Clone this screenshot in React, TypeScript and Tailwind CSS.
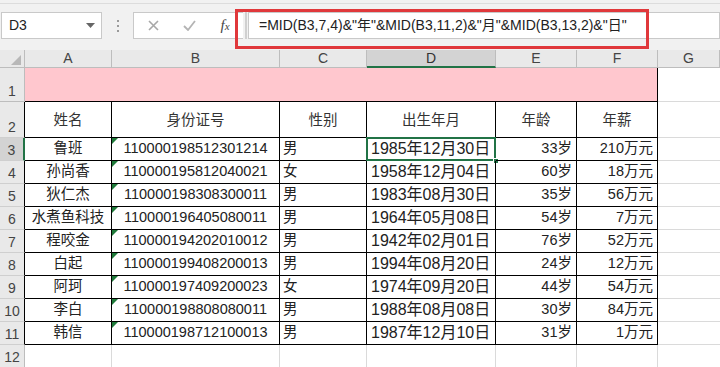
import type { ReactNode } from 'react';

const FONT = "font-['Liberation_Sans','Noto_Sans_CJK_SC',sans-serif]";

const COLS = ['A', 'B', 'C', 'D', 'E', 'F', 'G'];

const HEADERS = ['姓名', '身份证号', '性别', '出生年月', '年龄', '年薪'];

// name, id, gender, birth, age, salary
const ROWS = [
  ['鲁班', '110000198512301214', '男', '1985年12月30日', '33岁', '210万元'],
  ['孙尚香', '110000195812040021', '女', '1958年12月04日', '60岁', '18万元'],
  ['狄仁杰', '110000198308300011', '男', '1983年08月30日', '35岁', '56万元'],
  ['水煮鱼科技', '110000196405080011', '男', '1964年05月08日', '54岁', '7万元'],
  ['程咬金', '110000194202010012', '男', '1942年02月01日', '76岁', '52万元'],
  ['白起', '110000199408200013', '男', '1994年08月20日', '24岁', '12万元'],
  ['阿珂', '110000197409200023', '女', '1974年09月20日', '44岁', '54万元'],
  ['李白', '110000198808080011', '男', '1988年08月08日', '30岁', '84万元'],
  ['韩信', '110000198712100013', '男', '1987年12月10日', '31岁', '1万元'],
];

function RowHead({ n, className }: { n: number; className: string }) {
  return (
    <div className={`flex items-end justify-center text-[14px] leading-[20px] text-[#444] ${className}`}>
      {n}
    </div>
  );
}

function Cell({ className, children }: { className: string; children?: ReactNode }) {
  return <div className={`relative flex items-center overflow-visible whitespace-nowrap ${className}`}>{children}</div>;
}

function Toolbar() {
  return (
    <div className="relative h-[50px] bg-[#f1f1f1] pt-[3px]">
      <div className="flex items-start border-t border-[#dcdcdc] pt-[8px] pl-[1px]">
        {/* name box */}
        <div className="w-[101px] h-[27px] bg-white border border-[#c9c9c9] flex items-center justify-between pl-[7px] pr-[6px] text-[14px] text-[#222]">
          <span>D3</span>
          <svg width="9" height="5" viewBox="0 0 9 5">
            <path d="M0 0h9L4.5 5z" fill="#666" />
          </svg>
        </div>
        <div className="w-[31px] h-[27px] flex flex-col items-center justify-center gap-[3px]">
          <span className="w-[2px] h-[2px] bg-[#9a9a9a]" />
          <span className="w-[2px] h-[2px] bg-[#9a9a9a]" />
          <span className="w-[2px] h-[2px] bg-[#9a9a9a]" />
        </div>
        {/* formula buttons */}
        <div className="w-[110px] h-[27px] bg-white border-y border-l border-[#c9c9c9] flex items-center">
          <div className="w-[36px] flex justify-center ml-[1px]">
            <svg width="11" height="11" viewBox="0 0 11 11">
              <path d="M1 1l9 9M10 1l-9 9" stroke="#a8a8a8" strokeWidth="1.6" />
            </svg>
          </div>
          <div className="w-[36px] flex justify-center">
            <svg width="13" height="11" viewBox="0 0 13 11">
              <path d="M1 6l4 4L12 1" stroke="#b4b4b4" strokeWidth="1.8" fill="none" />
            </svg>
          </div>
          <div className="w-[36px] flex justify-center font-['Liberation_Serif',serif] italic text-[15px] text-[#444] leading-none">
            f<span className="text-[11px] mt-[3px]">x</span>
          </div>
        </div>
        <div className="w-[2px] h-[27px] border-x border-[#d0d0d0] bg-[#f1f1f1] ml-[2px]" />
        <div className="flex-1 h-[27px] bg-white border border-[#c9c9c9] ml-[1px] flex items-center pl-[10px] text-[14px] text-[#222]">
          =MID(B3,7,4)&amp;"年"&amp;MID(B3,11,2)&amp;"月"&amp;MID(B3,13,2)&amp;"日"
        </div>
      </div>
      {/* annotation */}
      <div className="absolute left-[235px] top-[9px] w-[414px] h-[40px] border-[3px] border-[#e0383b] pointer-events-none" />
    </div>
  );
}

export default function App() {
  return (
    <div className={`w-[720px] h-[367px] overflow-hidden bg-white ${FONT}`}>
      <Toolbar />
      <div className="grid grid-cols-[25px_87px_168px_87px_129px_81px_81px_1fr] grid-rows-[18px_34px_36px_repeat(10,23px)]">
        {/* column header row */}
        <div className="bg-[#e9e9e9] border-r border-b border-[#bdbdbd] flex items-end justify-end pr-[3px] pb-[2px]">
          <svg width="10" height="10" viewBox="0 0 10 10">
            <path d="M10 0v10H0z" fill="#b8b8b8" />
          </svg>
        </div>
        {COLS.map(c => (
          <div
            key={c}
            className={
              c === 'D'
                ? 'bg-[#d3d3d3] border-r border-[#bdbdbd] border-b-2 border-b-[#217346] flex items-center justify-center text-[14px] text-[#333]'
                : 'bg-[#e9e9e9] border-r border-b border-[#bdbdbd] flex items-center justify-center text-[14px] text-[#444]'
            }
          >
            {c}
          </div>
        ))}

        {/* row 1 (pink) */}
        <RowHead n={1} className="bg-[#e9e9e9] border-r border-b border-[#bdbdbd]" />
        <Cell className="bg-[#ffc7ce] border-b border-black" />
        <Cell className="bg-[#ffc7ce] border-b border-black" />
        <Cell className="bg-[#ffc7ce] border-b border-black" />
        <Cell className="bg-[#ffc7ce] border-b border-black" />
        <Cell className="bg-[#ffc7ce] border-b border-black" />
        <Cell className="bg-[#ffc7ce] border-b border-r border-black" />
        <Cell className="border-b border-[#dadada]" />

        {/* row 2 headers */}
        <RowHead n={2} className="bg-[#e9e9e9] border-r border-r-black border-b border-b-[#cfcfcf]" />
        {HEADERS.map(h => (
          <Cell key={h} className="justify-center border-r border-b border-black text-[14.5px] text-[#333] pt-[2px]">
            {h}
          </Cell>
        ))}
        <Cell className="border-b border-[#dadada]" />

        {/* data rows */}
        {ROWS.map((r, i) => {
          const n = i + 3;
          const sel = n === 3;
          return [
            <RowHead
              key={`h${n}`}
              n={n}
              className={
                sel
                  ? 'bg-[#d3d3d3] border-r-2 border-r-[#217346] border-b border-b-[#cfcfcf] text-[#222]'
                  : 'bg-[#e9e9e9] border-r border-r-black border-b border-b-[#cfcfcf]'
              }
            />,
            <Cell key={`a${n}`} className="justify-center border-r border-b border-black text-[14.5px] text-[#222]">
              {r[0]}
            </Cell>,
            <Cell key={`b${n}`} className="justify-center border-r border-b border-black text-[14.5px] text-[#222]">
              <svg className="absolute left-0 top-0" width="6" height="6" viewBox="0 0 6 6">
                <path d="M0 0h6L0 6z" fill="#1f7a3a" />
              </svg>
              {r[1]}
            </Cell>,
            <Cell key={`c${n}`} className="pl-[3px] border-r border-b border-black text-[14.5px] text-[#222]">
              {r[2]}
            </Cell>,
            <Cell key={`d${n}`} className="pl-[4px] border-r border-b border-black text-[16px] text-[#222]">
              {r[3]}
              {sel && (
                <>
                  <div className="absolute -left-px -top-px -right-px -bottom-px border-2 border-[#217346]" />
                  <div className="absolute -right-[4px] -bottom-[4px] w-[6px] h-[6px] bg-[#217346] border border-white" />
                </>
              )}
            </Cell>,
            <Cell key={`e${n}`} className="justify-end pr-[4px] border-r border-b border-black text-[14.5px] text-[#222]">
              {r[4]}
            </Cell>,
            <Cell key={`f${n}`} className="justify-end pr-[4px] border-r border-b border-black text-[14.5px] text-[#222]">
              {r[5]}
            </Cell>,
            <Cell key={`g${n}`} className="border-b border-[#dadada]" />,
          ];
        })}

        {/* row 12 */}
        <RowHead n={12} className="bg-[#e9e9e9] border-r border-b border-[#bdbdbd]" />
        <Cell className="border-r border-b border-[#dadada]" />
        <Cell className="border-r border-b border-[#dadada]" />
        <Cell className="border-r border-b border-[#dadada]" />
        <Cell className="border-r border-b border-[#dadada]" />
        <Cell className="border-r border-b border-[#dadada]" />
        <Cell className="border-r border-b border-[#dadada]" />
        <Cell className="border-b border-[#dadada]" />
      </div>
    </div>
  );
}
